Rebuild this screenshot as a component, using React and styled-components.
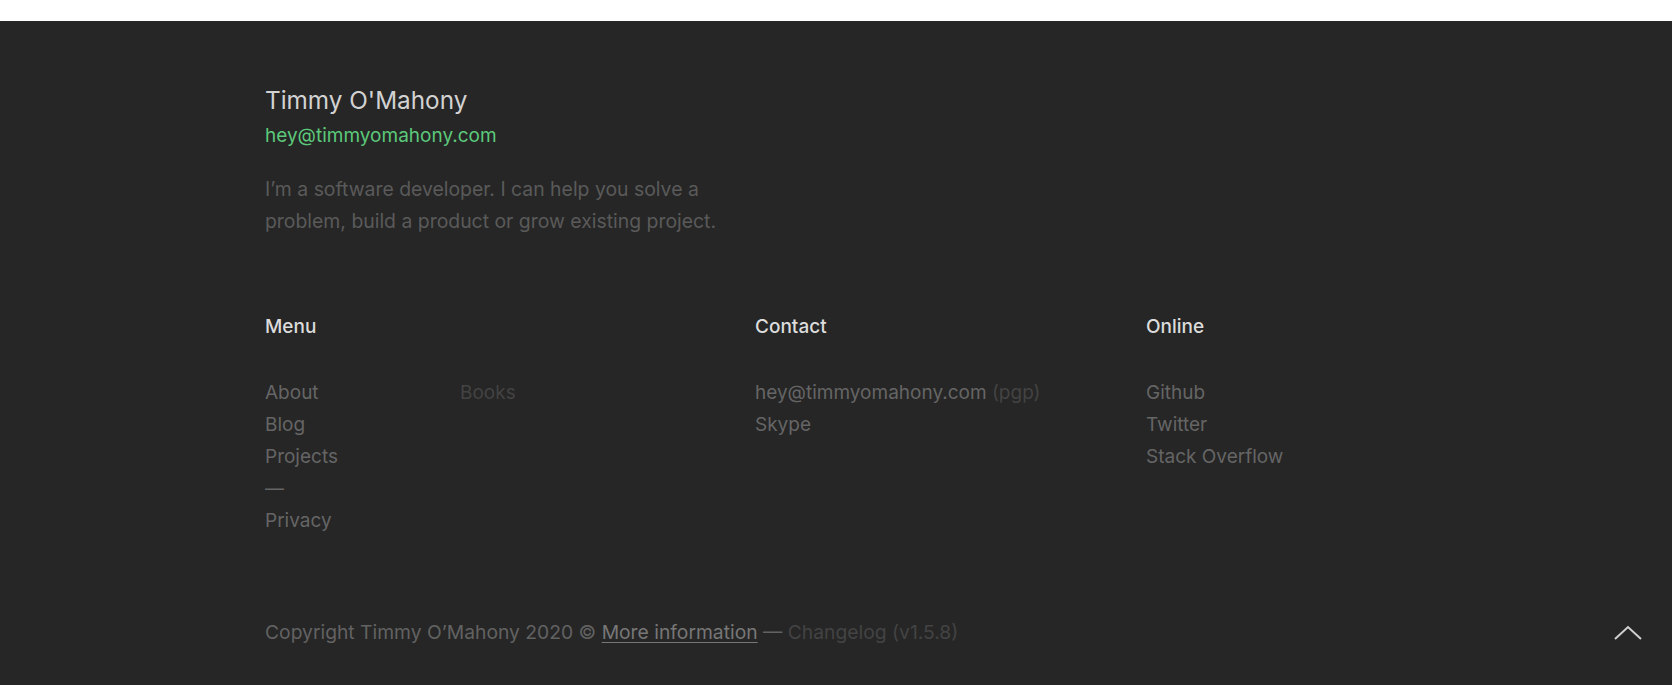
import React from "react";
import styled, { createGlobalStyle } from "styled-components";

const GlobalStyle = createGlobalStyle`
  html, body {
    margin: 0;
    padding: 0;
    background: #ffffff;
  }
  body {
    font-family: Inter, Roboto, "Liberation Sans", sans-serif;
    -webkit-font-smoothing: antialiased;
  }
`;

const TopBand = styled.div`
  height: 21px;
  background: #ffffff;
`;

const Footer = styled.footer`
  position: relative;
  background: #262626;
  min-height: 664px;
  box-sizing: border-box;
  padding: 62px 265px 0 265px;
`;

const Intro = styled.div`
  display: flex;
  flex-direction: column;
`;

const Name = styled.h2`
  margin: 0;
  font-size: 24.3px;
  font-weight: 400;
  line-height: 34px;
  color: #d2d2d2;
`;

const Email = styled.a`
  margin-top: 4px;
  font-size: 19px;
  line-height: 30px;
  color: #5cc97b;
  text-decoration: none;
`;

const Blurb = styled.p`
  margin: 22px 0 0 0;
  width: 490px;
  font-size: 19.4px;
  line-height: 32px;
  color: #5a5a5a;
`;

const Columns = styled.div`
  display: grid;
  grid-template-columns: 490px 391px 1fr;
  margin-top: 75px;
`;

const Column = styled.div`
  display: flex;
  flex-direction: column;
`;

const Heading = styled.h3`
  margin: 0 0 35px 0;
  font-size: 19px;
  font-weight: 500;
  line-height: 30px;
  color: #dcdcdc;
`;

const SubColumns = styled.div`
  display: grid;
  grid-template-columns: 195px 1fr;
`;

const LinkList = styled.ul`
  list-style: none;
  margin: 0;
  padding: 0;
`;

const Item = styled.li`
  font-size: 19px;
  line-height: 32px;
  color: ${(p) => (p.$dim ? "#434343" : "#656565")};
`;

const Muted = styled.span`
  color: #434343;
`;

const Bottom = styled.div`
  margin-top: 80px;
  font-size: 19.3px;
  line-height: 30px;
  color: #626262;
`;

const InfoLink = styled.a`
  color: #777777;
  text-decoration: underline;
  text-underline-offset: 3px;
`;

const TopButton = styled.button`
  position: absolute;
  right: 27px;
  top: 600px;
  width: 34px;
  height: 24px;
  padding: 0;
  border: 0;
  background: none;
  cursor: pointer;
  display: flex;
  align-items: center;
  justify-content: center;
`;

export default function App() {
  return (
    <>
      <GlobalStyle />
      <TopBand />
      <Footer>
        <Intro>
          <Name>Timmy O'Mahony</Name>
          <Email href="#">hey@timmyomahony.com</Email>
          <Blurb>
            I’m a software developer. I can help you solve a problem, build a
            product or grow existing project.
          </Blurb>
        </Intro>
        <Columns>
          <Column>
            <Heading>Menu</Heading>
            <SubColumns>
              <LinkList>
                <Item>About</Item>
                <Item>Blog</Item>
                <Item>Projects</Item>
                <Item>—</Item>
                <Item>Privacy</Item>
              </LinkList>
              <LinkList>
                <Item $dim>Books</Item>
              </LinkList>
            </SubColumns>
          </Column>
          <Column>
            <Heading>Contact</Heading>
            <LinkList>
              <Item>
                hey@timmyomahony.com <Muted>(pgp)</Muted>
              </Item>
              <Item>Skype</Item>
            </LinkList>
          </Column>
          <Column>
            <Heading>Online</Heading>
            <LinkList>
              <Item>Github</Item>
              <Item>Twitter</Item>
              <Item>Stack Overflow</Item>
            </LinkList>
          </Column>
        </Columns>
        <Bottom>
          Copyright Timmy O’Mahony 2020 © <InfoLink href="#">More information</InfoLink>{" "}
          — <Muted>Changelog (v1.5.8)</Muted>
        </Bottom>
        <TopButton aria-label="Back to top">
          <svg width="30" height="16" viewBox="0 0 30 16" fill="none">
            <path d="M2 14 L15 2 L28 14" stroke="#d0d0d0" strokeWidth="2" />
          </svg>
        </TopButton>
      </Footer>
    </>
  );
}
